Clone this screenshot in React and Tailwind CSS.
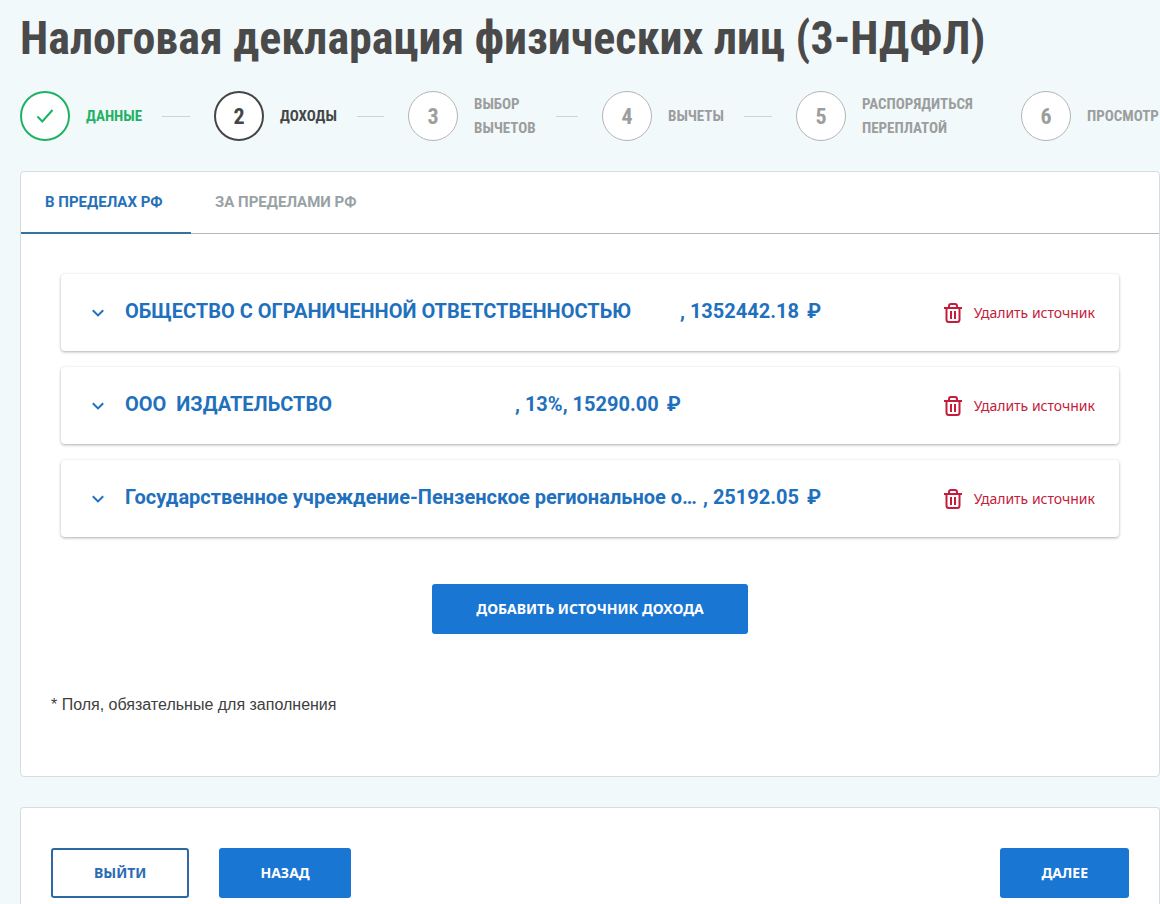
import { useState } from "react";
import clsx from "clsx";

const steps = [
  { id: 1, label: ["ДАННЫЕ"], status: "done", width: "w-[194px]", line: true },
  { id: 2, label: ["ДОХОДЫ"], status: "active", width: "w-[194px]", line: true },
  { id: 3, label: ["ВЫБОР", "ВЫЧЕТОВ"], status: "next", width: "w-[194px]", line: true },
  { id: 4, label: ["ВЫЧЕТЫ"], status: "next", width: "w-[194px]", line: true },
  { id: 5, label: ["РАСПОРЯДИТЬСЯ", "ПЕРЕПЛАТОЙ"], status: "next", width: "w-[225px]" },
  { id: 6, label: ["ПРОСМОТР"], status: "next", width: "w-[194px]" },
];

const tabs = ["В ПРЕДЕЛАХ РФ", "ЗА ПРЕДЕЛАМИ РФ"];

const sources = [
  {
    id: 1,
    name: "ОБЩЕСТВО С ОГРАНИЧЕННОЙ ОТВЕТСТВЕННОСТЬЮ",
    nameWidth: "w-[555px]",
    amount: ", 1352442.18",
  },
  {
    id: 2,
    name: "ООО\u00a0 ИЗДАТЕЛЬСТВО",
    nameWidth: "w-[390px]",
    amount: ", 13%, 15290.00",
  },
  {
    id: 3,
    name: "Государственное учреждение-Пензенское региональное о…",
    nameWidth: "w-[578px]",
    amount: ", 25192.05",
  },
];

function CheckIcon() {
  return (
    <svg width="18" height="16" viewBox="0 0 18 16" fill="none" stroke="currentColor" strokeWidth="2" aria-hidden="true">
      <path d="M1.5 8.5 6.3 13.5 16.5 2" />
    </svg>
  );
}

function ChevronIcon() {
  return (
    <svg width="14" height="10" viewBox="0 0 14 10" fill="none" stroke="currentColor" strokeWidth="2" aria-hidden="true">
      <path d="M1.8 2.2 7 7.4 12.2 2.2" />
    </svg>
  );
}

function TrashIcon() {
  return (
    <svg width="18" height="20" viewBox="0 0 18 20" fill="none" stroke="currentColor" strokeWidth="2" aria-hidden="true">
      <path d="M0 5h18" />
      <path d="M5 5V3.2C5 2 5.8 1 7 1h4c1.2 0 2 1 2 2.2V5" />
      <path d="M2.500 5v11.500C2.500 18 3.300 19 4.800 19h8.400c1.500 0 2.300-1 2.300-2.500V5" />
      <path d="M7 8v8M11 8v8" />
    </svg>
  );
}

function Step({ step }) {
  const { id, label, status, width, line } = step;

  return (
    <li
      className={clsx(
        "flex shrink-0 items-center font-['Roboto_Condensed',Roboto,sans-serif] font-bold whitespace-nowrap",
        width,
        status === "done" && "text-[#1fb264]",
        status === "active" && "text-[#444645]",
        status === "next" && "text-[#9b9e9d]"
      )}
    >
      <span
        className={clsx(
          "flex size-[50px] shrink-0 items-center justify-center rounded-full bg-white text-[22px]",
          status === "done" && "border-2 border-[#1fb264]",
          status === "active" && "border-2 border-[#444645]",
          status === "next" && "border border-[#b4b4b4]"
        )}
      >
        {status === "done" ? <CheckIcon /> : id}
      </span>
      <span className="ml-4 text-[15px] leading-6">
        {label.map((text) => (
          <span key={text} className="block">
            {text}
          </span>
        ))}
      </span>
      {line && <span className="mr-6 ml-5 h-px flex-1 bg-[#cdd3d4]" />}
    </li>
  );
}

function SourceCard({ source, onDelete }) {
  return (
    <li className="flex h-[77px] items-center rounded-sm bg-white pr-6 pl-[30px] shadow-[0_1px_3px_rgba(0,0,0,0.32)]">
      <button type="button" className="flex items-center text-left text-[#1f70bd]">
        <ChevronIcon />
        <span className="ml-5 flex pb-1 font-[Roboto,sans-serif] text-xl leading-6 font-bold whitespace-nowrap">
          <span className={source.nameWidth}>{source.name}</span>
          <span>{source.amount}</span>
          <span className="ml-2">₽</span>
        </span>
      </button>
      <button
        type="button"
        className="ml-auto flex items-center gap-3 font-['Noto_Sans',sans-serif] text-sm whitespace-nowrap text-[#c41c3b]"
        onClick={() => onDelete(source.id)}
      >
        <TrashIcon />
        Удалить источник
      </button>
    </li>
  );
}

function Button({ outline, wide, children, ...props }) {
  return (
    <button
      type="button"
      className={clsx(
        "h-[50px] rounded-[3px] font-['Noto_Sans',sans-serif] text-sm font-bold whitespace-nowrap",
        wide ? "px-11" : "px-[41px]",
        outline
          ? "border-2 border-[#2d69a3] bg-white text-[#2b6cb3]"
          : "bg-[#1976d2] text-white"
      )}
      {...props}
    >
      {children}
    </button>
  );
}

export default function App() {
  const [activeTab, setActiveTab] = useState(0);
  const [items, setItems] = useState(sources);

  function handleDelete(id) {
    setItems((current) => current.filter((item) => item.id !== id));
  }

  return (
    <div className="flex h-screen flex-col overflow-hidden bg-[#f2f9fb] pl-5">
      <h1 className="pt-1 font-['Roboto_Condensed',Roboto,sans-serif] text-[46px] leading-[68px] font-bold whitespace-nowrap text-[#4a4a4a]">
        Налоговая декларация физических лиц (3-НДФЛ)
      </h1>

      <ol className="mt-[19px] flex h-[50px] shrink-0 items-center">
        {steps.map((step) => (
          <Step key={step.id} step={step} />
        ))}
      </ol>

      <main className="mt-[30px] shrink-0 rounded-sm border border-[#d7dcdf] bg-white">
        <div role="tablist" className="flex border-b border-[#b3b8ba]">
          {tabs.map((tab, i) => (
            <button
              key={tab}
              type="button"
              role="tab"
              aria-selected={activeTab === i}
              className={clsx(
                "-mb-px h-[62px] min-w-[170px] border-b-2 px-6 text-left font-[Roboto,sans-serif] text-[15px] font-bold",
                activeTab === i
                  ? "border-[#34729f] text-[#2670b8]"
                  : "border-transparent text-[#98a2a4]"
              )}
              onClick={() => setActiveTab(i)}
            >
              {tab}
            </button>
          ))}
        </div>

        <div className="px-10 pt-10">
          <ul className="space-y-4">
            {items.map((source) => (
              <SourceCard key={source.id} source={source} onDelete={handleDelete} />
            ))}
          </ul>
          <div className="mt-[47px] flex justify-center">
            <Button wide>ДОБАВИТЬ ИСТОЧНИК ДОХОДА</Button>
          </div>
        </div>

        <p className="mt-[59px] mb-[59px] px-[30px] font-['Liberation_Sans',sans-serif] text-base leading-6 text-[#404040]">
          * Поля, обязательные для заполнения
        </p>
      </main>

      <footer className="mt-[30px] flex flex-1 items-start rounded-t-sm border border-b-0 border-[#d7dcdf] bg-white px-[30px] pt-10">
        <Button outline>ВЫЙТИ</Button>
        <div className="ml-[30px] flex flex-1 justify-between">
          <Button>НАЗАД</Button>
          <Button>ДАЛЕЕ</Button>
        </div>
      </footer>
    </div>
  );
}
